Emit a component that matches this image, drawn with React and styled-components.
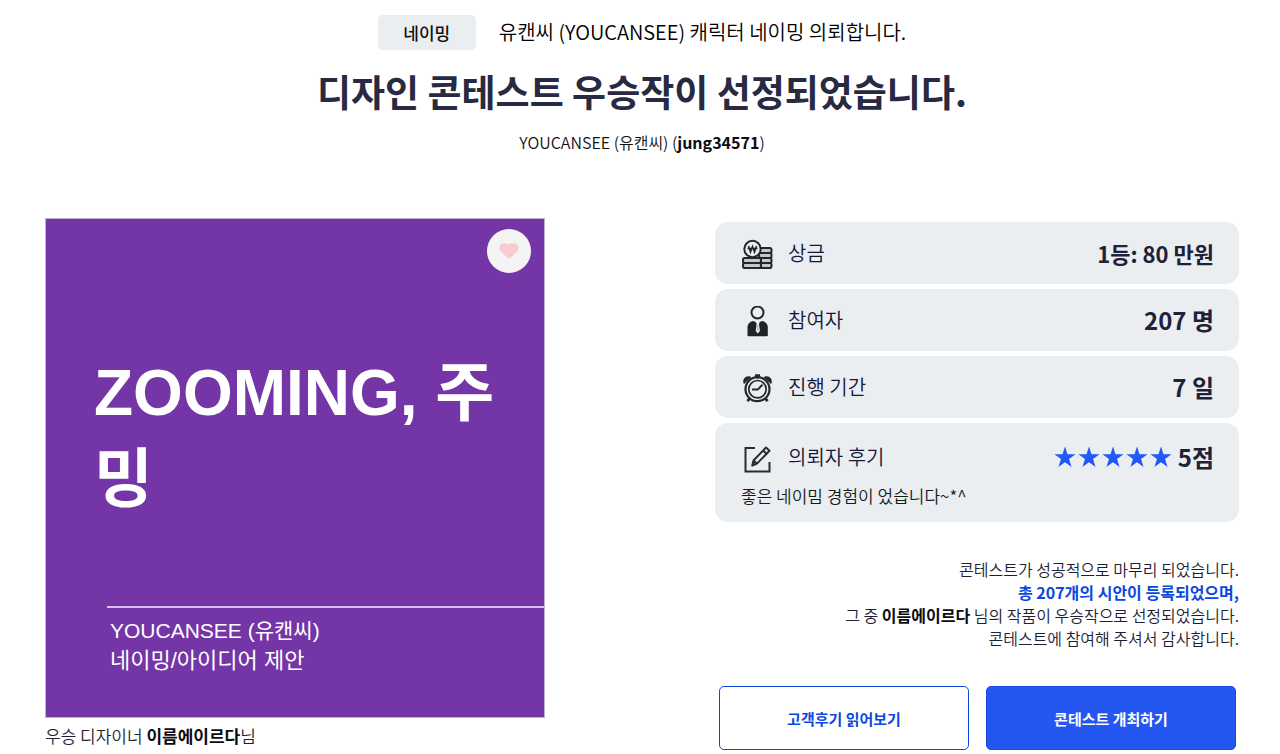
import React from "react";
import styled, { createGlobalStyle } from "styled-components";

const GlobalStyle = createGlobalStyle`
  * { box-sizing: border-box; }
  body {
    margin: 0;
    background: #ffffff;
    color: #111111;
    font-family: "Noto Sans CJK KR", "Noto Sans", sans-serif;
    font-weight: 350;
  }
  h1, h2, p, ul, dl, dd, dt, figure { margin: 0; padding: 0; }
  strong { font-weight: 700; color: #0b0b12; }
`;

const Page = styled.main`
  padding: 15px 41px 0 45px;
`;

const Header = styled.header`
  display: flex;
  flex-direction: column;
  align-items: center;
  text-align: center;
`;

const Request = styled.div`
  display: flex;
  align-items: flex-start;
  gap: 23px;
`;

const Badge = styled.span`
  width: 98px;
  border-radius: 5px;
  background: #eaeef1;
  font-size: 17px;
  font-weight: 500;
  line-height: 35px;
`;

const RequestTitle = styled.p`
  font-size: 20px;
  line-height: 34px;
  color: #000000;
`;

const Title = styled.h1`
  margin-top: 14px;
  font-size: 37px;
  font-weight: 700;
  line-height: 54px;
  color: #272a42;
`;

const Client = styled.p`
  margin-top: 12px;
  font-size: 16px;
  line-height: 24px;
`;

const Content = styled.div`
  display: grid;
  grid-template-columns: minmax(0, 500fr) minmax(0, 524fr);
  gap: 170px;
  margin-top: 64px;
`;

const Entry = styled.figure`
  display: flex;
  flex-direction: column;
`;

const Artwork = styled.div`
  position: relative;
  display: flex;
  flex-direction: column;
  justify-content: flex-end;
  aspect-ratio: 1;
  border: 1px solid #c4b0d6;
  background: #7436a6;
  color: #ffffff;
  font-family: "Liberation Sans", "Noto Sans CJK KR", sans-serif;
  font-weight: 400;
`;

const ArtworkName = styled.h2`
  padding: 0 40px 0 48px;
  margin-bottom: 84px;
  font-size: 64px;
  font-weight: 700;
  line-height: 86px;
  word-break: break-all;
`;

const ArtworkInfo = styled.div`
  margin-left: 61px;
  padding: 8px 3px 41px;
  border-top: 2px solid #ddbdf0;
  line-height: 30px;
`;

const Brand = styled.p`
  font-size: 21px;
`;

const Category = styled.p`
  font-size: 22px;
`;

const Like = styled.button`
  position: absolute;
  top: 10px;
  right: 13px;
  display: flex;
  align-items: center;
  justify-content: center;
  width: 44px;
  height: 44px;
  padding: 0;
  border: 0;
  border-radius: 50%;
  background: #f4f4f5;
`;

const Caption = styled.figcaption`
  margin-top: 6px;
  font-size: 17px;
  line-height: 24px;
  color: #1d1f35;
`;

const Summary = styled.section`
  display: flex;
  flex-direction: column;
  padding-top: 4px;
`;

const Facts = styled.dl`
  display: flex;
  flex-direction: column;
  gap: 5px;
`;

const Fact = styled.div`
  display: grid;
  grid-template-columns: auto 1fr;
  align-items: center;
  padding: ${(p) => (p.$reviewed ? "3px 25px 14px 26px" : "0 25px 0 26px")};
  border-radius: 13px;
  background: #eaeef1;
`;

const FactLabel = styled.dt`
  display: flex;
  align-items: center;
  gap: 15px;
  height: 62px;
  font-size: 20px;
  line-height: 30px;
  color: #15173a;

  svg { margin-top: 4px; }
`;

const FactValue = styled.dd`
  display: flex;
  align-items: center;
  justify-content: flex-end;
  gap: 6px;
  font-size: ${(p) => (p.$long ? "22px" : "24px")};
  font-weight: 700;
  line-height: 36px;
  color: #1f2138;
`;

const Review = styled.dd`
  grid-column: 1 / -1;
  margin-top: -4px;
  font-size: 17px;
  line-height: 24px;
  color: #191919;
`;

const Stars = styled.span`
  display: flex;
  gap: 2px;
`;

const Closing = styled.p`
  margin-top: 36px;
  font-size: 16px;
  line-height: 23px;
  text-align: right;
  color: #1d1f35;
`;

const Total = styled.strong`
  color: #0b48dc;
`;

const Actions = styled.div`
  display: grid;
  grid-template-columns: 1fr 1fr;
  gap: 17px;
  margin-top: 36px;
  padding: 0 3px 0 4px;
`;

const Action = styled.button`
  height: 64px;
  padding: 0;
  border: 1px solid ${(p) => (p.$primary ? "#1748df" : "#0b48dc")};
  border-radius: 5px;
  background: ${(p) => (p.$primary ? "#2456f2" : "#ffffff")};
  color: ${(p) => (p.$primary ? "#ffffff" : "#0b48dc")};
  font-family: inherit;
  font-size: 15px;
  font-weight: 700;
`;

const PrizeIcon = () => (
  <svg width="32" height="32" viewBox="0 0 32 32" fill="none" stroke="#23262b" strokeWidth="2" aria-hidden="true">
    <rect x="18" y="9" width="12.5" height="5" rx="1.8" fill="#c3c8ca" />
    <rect x="18" y="14" width="12.5" height="5" rx="1.8" fill="#c3c8ca" />
    <rect x="19.5" y="19" width="11" height="5" rx="1.8" fill="#c3c8ca" />
    <rect x="19.5" y="24" width="11" height="5" rx="1.8" fill="#c3c8ca" />
    <rect x="2" y="19" width="18" height="5" rx="1.8" fill="#c3c8ca" />
    <rect x="2" y="24" width="18" height="5" rx="1.8" fill="#c3c8ca" />
    <circle cx="11.5" cy="10" r="8.2" fill="#eaeef1" />
    <path d="M7.5 7l2 6 2-5.5 2 5.500 2-6M6.500 9.500h10" strokeWidth="1.6" />
  </svg>
);

const PersonIcon = () => (
  <svg width="32" height="32" viewBox="0 0 32 32" aria-hidden="true">
    <circle cx="16.5" cy="6.500" r="6" fill="none" stroke="#23262b" strokeWidth="2" />
    <path d="M12.200 15C8.500 15.800 6.500 18 6.500 21v8.200q0 1 1 1h18.300q1 0 1-1V21c0-3-2-5.200-5.700-6L16.700 17z" fill="#202226" />
    <path d="M14.500 15h4.500l-1 3 .9 7-2.100 2.600-2.100-2.600.9-7z" fill="#eaeef1" />
    <path d="M16.800 19v6" stroke="#9b9fa2" strokeWidth=".8" />
  </svg>
);

const ClockIcon = () => (
  <svg width="32" height="32" viewBox="0 0 32 32" fill="none" stroke="#24272b" aria-hidden="true">
    <path d="M3 10.500C1.800 5.500 4.800 2.800 9.700 4.200zM30 10.500c1.200-5-1.800-7.700-6.700-6.300z" fill="#24272b" strokeWidth="1" />
    <path d="M14 2.500h5M16.500 2.500v3" strokeWidth="2.4" />
    <circle cx="16.500" cy="16.200" r="12" strokeWidth="2.2" />
    <circle cx="16.500" cy="16.200" r="8.700" strokeWidth="1.7" />
    <path d="M11 16.600h5.700l4.800-4.900" strokeWidth="2" />
    <path d="M8.500 25.500l-2 2.700M24.500 25.500l2 2.700" strokeWidth="2.8" />
  </svg>
);

const ReviewIcon = () => (
  <svg width="32" height="32" viewBox="0 0 32 32" fill="none" stroke="#292c2f" strokeWidth="2" aria-hidden="true">
    <path d="M14 5H4.500v23.500H28.500V19" />
    <path d="M12.500 17.500L25 4.500l3.500 3.200-12.500 12.900-4.700 2z" strokeLinejoin="round" />
    <path d="M22.100 7.500l3.400 3.200M12.500 17.500l3.400 3.100M11.500 22.500l1.600-3" />
  </svg>
);

const Star = () => (
  <svg width="22" height="22" viewBox="0 0 22 22" aria-hidden="true">
    <path d="M11 .5l2.500 7.800h8.100L15 13.100l2.600 8L11 16.200l-6.600 4.900 2.600-8L.4 8.300h8.100z" fill="#2258f3" />
  </svg>
);

const facts = [
  { label: "상금", value: "1등: 80 만원", icon: PrizeIcon, long: true },
  { label: "참여자", value: "207 명", icon: PersonIcon },
  { label: "진행 기간", value: "7 일", icon: ClockIcon },
  {
    label: "의뢰자 후기",
    value: "5점",
    icon: ReviewIcon,
    stars: 5,
    review: "좋은 네이밈 경험이 었습니다~*^",
  },
];

export default function App() {
  return (
    <>
      <GlobalStyle />
      <Page>
        <Header>
          <Request>
            <Badge>네이밍</Badge>
            <RequestTitle>유캔씨 (YOUCANSEE) 캐릭터 네이밍 의뢰합니다.</RequestTitle>
          </Request>
          <Title>디자인 콘테스트 우승작이 선정되었습니다.</Title>
          <Client>
            YOUCANSEE (유캔씨) (<strong>jung34571</strong>)
          </Client>
        </Header>

        <Content>
          <Entry>
            <Artwork>
              <ArtworkName>ZOOMING, 주밍</ArtworkName>
              <ArtworkInfo>
                <Brand>YOUCANSEE (유캔씨)</Brand>
                <Category>네이밍/아이디어 제안</Category>
              </ArtworkInfo>
              <Like type="button" aria-label="좋아요">
                <svg width="20" height="16" viewBox="0 0 20 16" aria-hidden="true">
                  <path d="M10 1.600C8.500.2 4.500-.4 2 1.200c-2.200 2-2.200 5.300 0 7.300l6.200 6.100q1.800 1.600 3.600 0L18 8.500c2.200-2 2.200-5.300 0-7.300C15.500-.4 11.500.2 10 1.600z" fill="#f7cccf" />
                </svg>
              </Like>
            </Artwork>
            <Caption>
              우승 디자이너 <strong>이름에이르다</strong>님
            </Caption>
          </Entry>

          <Summary>
            <Facts>
              {facts.map(({ label, value, icon: Icon, long, stars, review }) => (
                <Fact key={label} $reviewed={Boolean(review)}>
                  <FactLabel>
                    <Icon />
                    {label}
                  </FactLabel>
                  <FactValue $long={long}>
                    {stars && (
                      <Stars>
                        {Array.from({ length: stars }, (_, i) => (
                          <Star key={i} />
                        ))}
                      </Stars>
                    )}
                    {value}
                  </FactValue>
                  {review && <Review>{review}</Review>}
                </Fact>
              ))}
            </Facts>
            <Closing>
              콘테스트가 성공적으로 마무리 되었습니다.
              <br />
              <Total>총 207개의 시안이 등록되었으며,</Total>
              <br />그 중 <strong>이름에이르다</strong> 님의 작품이 우승작으로 선정되었습니다.
              <br />
              콘테스트에 참여해 주셔서 감사합니다.
            </Closing>
            <Actions>
              <Action type="button">고객후기 읽어보기</Action>
              <Action type="button" $primary>
                콘테스트 개최하기
              </Action>
            </Actions>
          </Summary>
        </Content>
      </Page>
    </>
  );
}
